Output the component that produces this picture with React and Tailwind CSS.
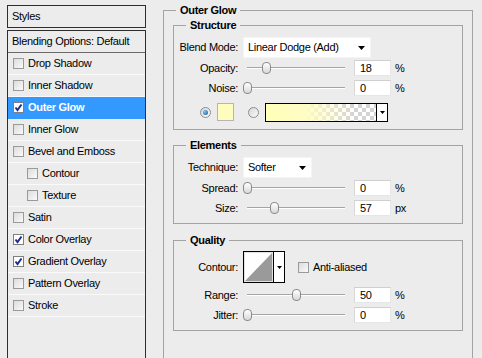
import { Fragment } from "react";

const LAYERS = [
  { name: "Drop Shadow" },
  { name: "Inner Shadow" },
  { name: "Outer Glow", checked: true, active: true },
  { name: "Inner Glow" },
  { name: "Bevel and Emboss" },
  { name: "Contour", indent: true },
  { name: "Texture", indent: true },
  { name: "Satin" },
  { name: "Color Overlay", checked: true },
  { name: "Gradient Overlay", checked: true },
  { name: "Pattern Overlay" },
  { name: "Stroke" },
];

const Check = ({ checked }) => (
  <span
    className={`w-[11px] h-[11px] shrink-0 border flex items-center justify-center ${
      checked ? "bg-white border-[#7f7f7f]" : "bg-[linear-gradient(135deg,#dcdcdc,#fafafa)] border-[#9a9a9a]"
    }`}
  >
    {checked && (
      <svg width="9" height="9" viewBox="0 0 9 9">
        <path d="M1.5 4.5 L3.5 7 L7.5 1.5" fill="none" stroke="#1f2d8a" strokeWidth="2" />
      </svg>
    )}
  </span>
);

const Arrow = () => (
  <svg width="7" height="4" viewBox="0 0 7 4" className="shrink-0">
    <path d="M0 0 H7 L3.5 4 Z" fill="#000" />
  </svg>
);

const Radio = ({ on }) => (
  <span className="w-[11px] h-[11px] shrink-0 rounded-full border border-[#8c8c8c] bg-[linear-gradient(135deg,#d6d6d6,#fbfbfb)] flex items-center justify-center">
    {on && <span className="w-[5px] h-[5px] rounded-full bg-[radial-gradient(circle_at_35%_35%,#7fc3f0,#11589c)]" />}
  </span>
);

const Slider = ({ at }) => (
  <div className="relative w-[98px] h-[14px] flex items-center">
    <div className="w-full h-[2px] border-t border-[#a5a5a5] border-b border-b-white" />
    <span
      className="absolute top-[1px] w-[9px] h-[12px] rounded-[4px] border border-[#8a8a8a] bg-[linear-gradient(to_bottom,#ffffff,#d8d8d8)]"
      style={{ left: at - 4 }}
    />
  </div>
);

const Field = ({ value }) => (
  <div className="w-[37px] h-[16px] bg-white border border-[#e6e6e6] border-t-[#cfcfcf] border-l-[#d8d8d8] pl-[5px] flex items-center">
    {value}
  </div>
);

const Label = ({ children }) => (
  <span className="w-[64px] shrink-0 text-right">{children}</span>
);

const SliderRow = ({ label, at, value, unit }) => (
  <div className="h-[20px] flex items-center">
    <Label>{label}</Label>
    <div className="ml-[9px]">
      <Slider at={at} />
    </div>
    <div className="ml-[9px]">
      <Field value={value} />
    </div>
    <span className="ml-[4px]">{unit}</span>
  </div>
);

const Group = ({ title, className = "", legendClass = "ml-[12px]", children }) => (
  <fieldset className={`border border-[#a3a3a3] ${className}`}>
    <legend className={`${legendClass} px-[4px] font-bold`}>{title}</legend>
    {children}
  </fieldset>
);

export default function App() {
  return (
    <div className="w-[482px] h-[358px] overflow-hidden bg-[#ececec] flex text-[11px] leading-[13px] tracking-[-0.3px] text-black font-['Liberation_Sans',Arial,sans-serif]">
      <div className="ml-[7px] mt-[5px] w-[139px] shrink-0 flex flex-col">
        <div className="h-[23px] shrink-0 border border-[#2e2e2e] pl-[4px] flex items-center">Styles</div>
        <div className="mt-[2px] shrink-0 border border-[#2e2e2e] h-[400px]">
          <div className="h-[22px] pl-[4px] flex items-center border-b border-[#6a6a6a]">
            Blending Options: Default
          </div>
          {LAYERS.map((l) => (
            <div
              key={l.name}
              className={`h-[22px] flex items-center gap-[4px] border-b ${
                l.active ? "bg-[#3399ff] text-white font-bold border-[#3399ff]" : "border-[#fafafa]"
              } ${l.indent ? "pl-[19px]" : "pl-[5px]"}`}
            >
              <Check checked={l.checked} />
              <span>{l.name}</span>
            </div>
          ))}
        </div>
      </div>

      <Group
        title="Outer Glow"
        legendClass="ml-[3px]"
        className="ml-[17px] mt-[4px] w-[310px] h-[400px] shrink-0 px-[9px]"
      >
        <Group title="Structure" className="mt-[2px] pt-[5px] pb-[5px]">
          <div className="h-[21px] flex items-center">
            <Label>Blend Mode:</Label>
            <div className="ml-[5px] w-[128px] h-[21px] bg-white border border-[#f4f4f4] pl-[4px] pr-[5px] flex items-center justify-between">
              <span>Linear Dodge (Add)</span>
              <Arrow />
            </div>
          </div>
          <SliderRow label="Opacity:" at={19} value="18" unit="%" />
          <SliderRow label="Noise:" at={0} value="0" unit="%" />
          <div className="mt-[2px] h-[24px] flex items-center">
            <span className="ml-[26px]">
              <Radio on />
            </span>
            <span className="ml-[6px] w-[17px] h-[18px] border border-[#b5b5b5] bg-[#fffcbf]" />
            <span className="ml-[14px]">
              <Radio />
            </span>
            <div className="ml-[6px] w-[123px] h-[19px] border border-black flex">
              <div className="flex-1 bg-white bg-[repeating-conic-gradient(#d4d4d4_0_25%,#ffffff_0_50%)] bg-[length:8px_8px]">
                <div className="w-full h-full bg-[linear-gradient(to_right,#ffffb8_0%,#fffdc4_35%,rgba(255,255,220,0)_80%)]" />
              </div>
              <div className="w-[11px] border-l border-black bg-white flex items-center justify-center">
                <svg width="5" height="3" viewBox="0 0 5 3">
                  <path d="M0 0 H5 L2.5 3 Z" fill="#000" />
                </svg>
              </div>
            </div>
          </div>
        </Group>

        <Group title="Elements" className="mt-[9px] pt-[5px] pb-[5px]">
          <div className="h-[21px] flex items-center">
            <Label>Technique:</Label>
            <div className="ml-[5px] w-[69px] h-[21px] bg-white border border-[#f4f4f4] pl-[4px] pr-[5px] flex items-center justify-between">
              <span>Softer</span>
              <Arrow />
            </div>
          </div>
          <SliderRow label="Spread:" at={0} value="0" unit="%" />
          <SliderRow label="Size:" at={27} value="57" unit="px" />
        </Group>

        <Group title="Quality" className="mt-[10px] pt-[4px] pb-[5px]">
          <div className="h-[32px] flex items-center">
            <Label>Contour:</Label>
            <div className="ml-[5px] w-[42px] h-[32px] border border-black flex bg-white">
              <svg width="29" height="30" viewBox="0 0 29 30" className="shrink-0">
                <rect x="0.5" y="0.5" width="28" height="29" fill="#fff" stroke="#e2e2e2" />
                <path d="M1 29 L28 1 L28 29 Z" fill="#9a9a9a" />
              </svg>
              <div className="flex-1 border-l border-black flex items-center justify-center">
                <svg width="5" height="3" viewBox="0 0 5 3">
                  <path d="M0 0 H5 L2.5 3 Z" fill="#000" />
                </svg>
              </div>
            </div>
            <span className="ml-[13px]">
              <Check />
            </span>
            <span className="ml-[4px]">Anti-aliased</span>
          </div>
          <div className="mt-[2px]">
            <SliderRow label="Range:" at={49} value="50" unit="%" />
            <SliderRow label="Jitter:" at={0} value="0" unit="%" />
          </div>
        </Group>
      </Group>
    </div>
  );
}
